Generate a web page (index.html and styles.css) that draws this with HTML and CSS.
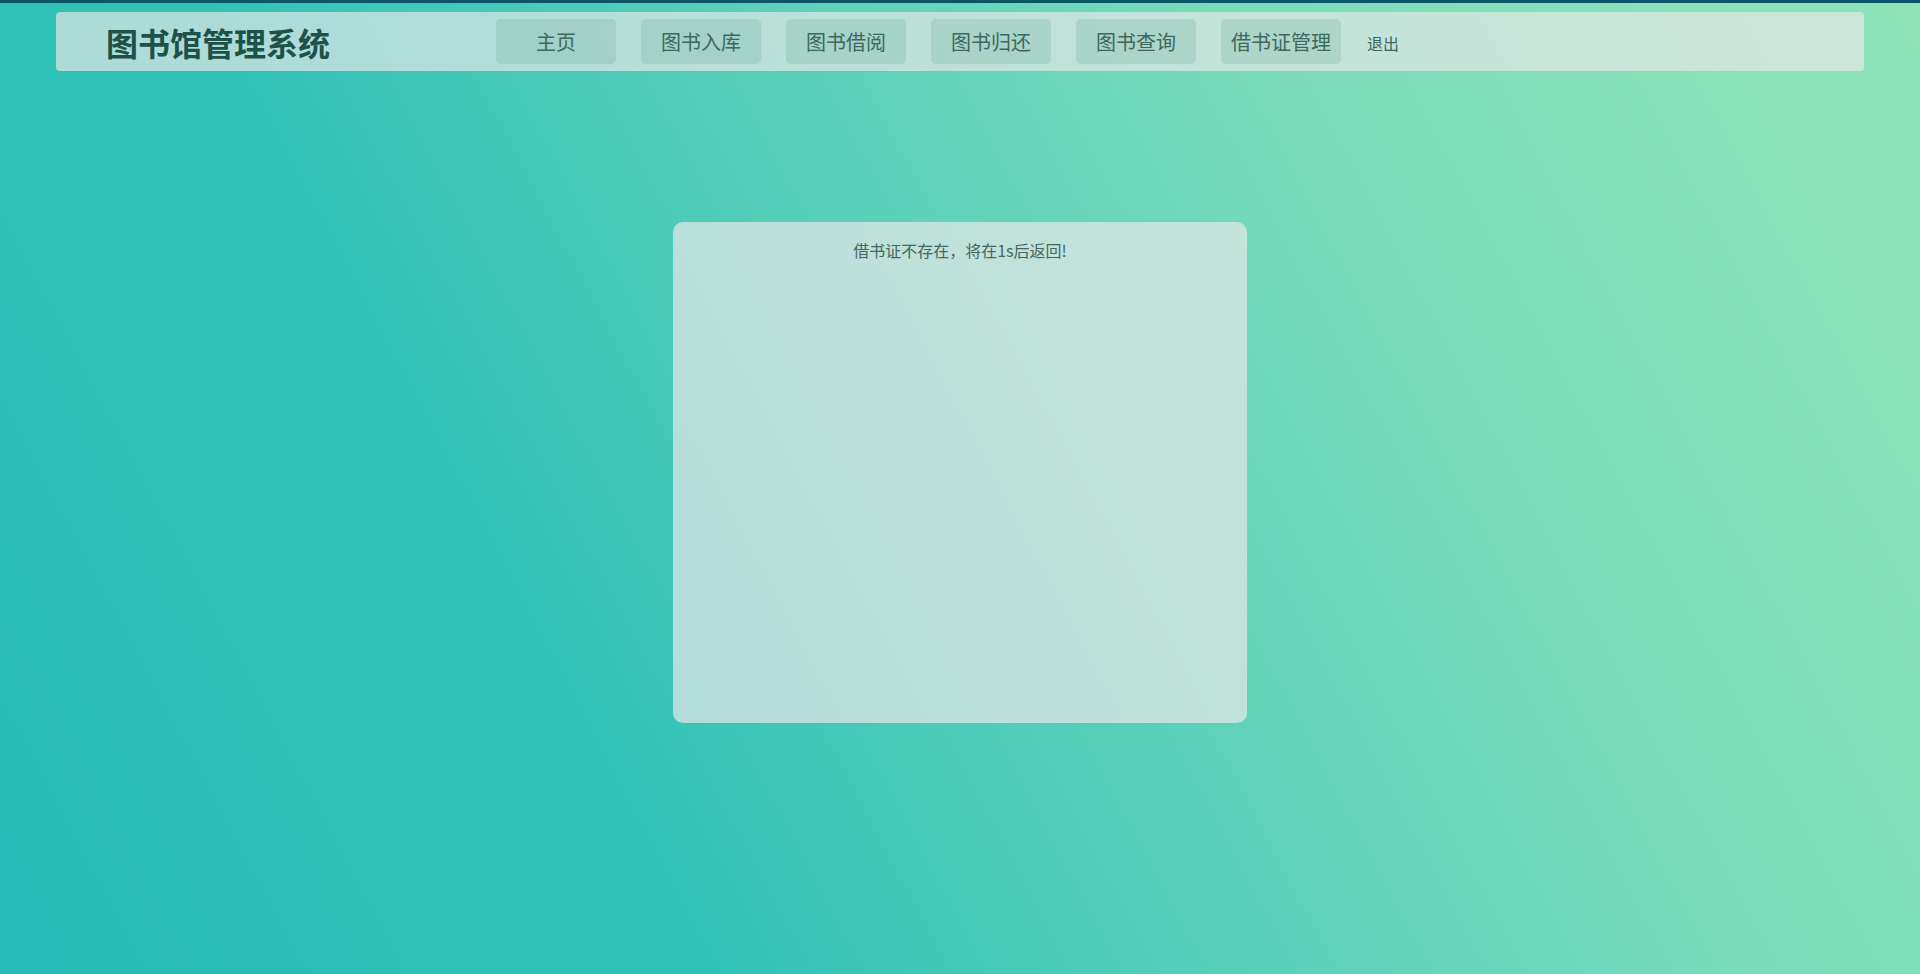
FILE: index.html
```html
<!DOCTYPE html>
<html lang="zh-CN">
<head>
<meta charset="utf-8">
<title>图书馆管理系统</title>
<link rel="stylesheet" href="styles.css">
</head>
<body>
<div class="topline"></div>
<header class="header">
  <div class="brand">图书馆管理系统</div>
  <nav class="nav">
    <a class="nav-btn">主页</a>
    <a class="nav-btn">图书入库</a>
    <a class="nav-btn">图书借阅</a>
    <a class="nav-btn">图书归还</a>
    <a class="nav-btn">图书查询</a>
    <a class="nav-btn">借书证管理</a>
    <a class="logout">退出</a>
  </nav>
</header>
<main class="main">
  <section class="card">
    <p class="message">借书证不存在，将在1s后返回!</p>
  </section>
</main>
</body>
</html>
```

FILE: styles.css
```css
html, body {
  margin: 0;
  padding: 0;
}
body {
  width: 1920px;
  height: 974px;
  overflow: hidden;
  font-family: "Noto Sans CJK SC", "Noto Sans", sans-serif;
  background: linear-gradient(62deg, #27bbb5 0%, #33c2b7 30%, #5ad0b9 52%, #7adcbb 72%, #8fe4b9 100%);
  display: flex;
  flex-direction: column;
}
.topline {
  height: 3px;
  background: #0b5566;
  flex: none;
}
.header {
  margin: 9px 56px 0;
  height: 59px;
  border-radius: 4px;
  background: rgba(232, 232, 232, 0.68);
  display: flex;
  align-items: center;
  flex: none;
}
.brand {
  width: 390px;
  padding-left: 50px;
  font-size: 32px;
  font-weight: 700;
  color: #1d5248;
  line-height: 1;
}
.nav {
  display: flex;
  align-items: center;
  gap: 25px;
}
.nav-btn {
  width: 120px;
  height: 45px;
  border-radius: 5px;
  background: rgba(70, 140, 125, 0.17);
  color: #3c685d;
  font-size: 20px;
  display: flex;
  align-items: center;
  justify-content: center;
  cursor: pointer;
}
.logout {
  font-size: 16px;
  color: #3e665c;
  margin-left: 1px;
  padding-top: 2px;
  cursor: pointer;
}
.main {
  display: flex;
  justify-content: center;
  padding-top: 151px;
}
.card {
  width: 574px;
  height: 501px;
  border-radius: 10px;
  background: rgba(232, 232, 232, 0.7);
  box-sizing: border-box;
  padding-top: 16px;
}
.message {
  margin: 0;
  text-align: center;
  font-size: 16px;
  line-height: 24px;
  color: #48665f;
}
```
